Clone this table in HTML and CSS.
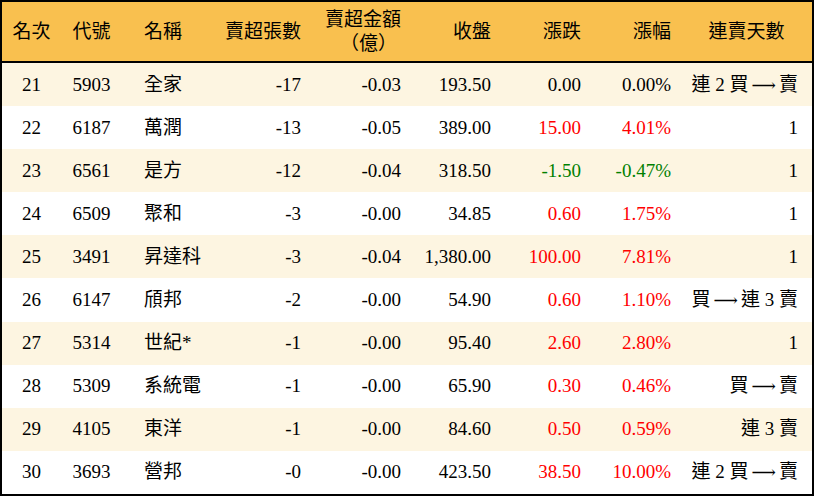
FILE: index.html
```html
<!DOCTYPE html>
<html lang="zh-Hant">
<head>
<meta charset="utf-8">
<title>賣超排行</title>
<link rel="stylesheet" href="styles.css">
</head>
<body>
<div class="board">
  <div class="row head">
    <div class="c1">名次</div>
    <div class="c2">代號</div>
    <div class="c3">名稱</div>
    <div class="num">賣超張數</div>
    <div class="num two">賣超金額<br><span class="unit">（億）</span></div>
    <div class="num">收盤</div>
    <div class="num">漲跌</div>
    <div class="num">漲幅</div>
    <div class="c9">連賣天數</div>
  </div>
  <div class="row odd">
    <div class="c1">21</div><div class="c2">5903</div><div class="c3">全家</div>
    <div class="num">-17</div><div class="num">-0.03</div><div class="num">193.50</div>
    <div class="num">0.00</div><div class="num">0.00%</div><div class="c9">連 2 買<span class="arrow">⟶</span>賣</div>
  </div>
  <div class="row">
    <div class="c1">22</div><div class="c2">6187</div><div class="c3">萬潤</div>
    <div class="num">-13</div><div class="num">-0.05</div><div class="num">389.00</div>
    <div class="num up">15.00</div><div class="num up">4.01%</div><div class="c9">1</div>
  </div>
  <div class="row odd">
    <div class="c1">23</div><div class="c2">6561</div><div class="c3">是方</div>
    <div class="num">-12</div><div class="num">-0.04</div><div class="num">318.50</div>
    <div class="num down">-1.50</div><div class="num down">-0.47%</div><div class="c9">1</div>
  </div>
  <div class="row">
    <div class="c1">24</div><div class="c2">6509</div><div class="c3">聚和</div>
    <div class="num">-3</div><div class="num">-0.00</div><div class="num">34.85</div>
    <div class="num up">0.60</div><div class="num up">1.75%</div><div class="c9">1</div>
  </div>
  <div class="row odd">
    <div class="c1">25</div><div class="c2">3491</div><div class="c3">昇達科</div>
    <div class="num">-3</div><div class="num">-0.04</div><div class="num">1,380.00</div>
    <div class="num up">100.00</div><div class="num up">7.81%</div><div class="c9">1</div>
  </div>
  <div class="row">
    <div class="c1">26</div><div class="c2">6147</div><div class="c3">頎邦</div>
    <div class="num">-2</div><div class="num">-0.00</div><div class="num">54.90</div>
    <div class="num up">0.60</div><div class="num up">1.10%</div><div class="c9">買<span class="arrow">⟶</span>連 3 賣</div>
  </div>
  <div class="row odd">
    <div class="c1">27</div><div class="c2">5314</div><div class="c3">世紀*</div>
    <div class="num">-1</div><div class="num">-0.00</div><div class="num">95.40</div>
    <div class="num up">2.60</div><div class="num up">2.80%</div><div class="c9">1</div>
  </div>
  <div class="row">
    <div class="c1">28</div><div class="c2">5309</div><div class="c3">系統電</div>
    <div class="num">-1</div><div class="num">-0.00</div><div class="num">65.90</div>
    <div class="num up">0.30</div><div class="num up">0.46%</div><div class="c9">買<span class="arrow">⟶</span>賣</div>
  </div>
  <div class="row odd">
    <div class="c1">29</div><div class="c2">4105</div><div class="c3">東洋</div>
    <div class="num">-1</div><div class="num">-0.00</div><div class="num">84.60</div>
    <div class="num up">0.50</div><div class="num up">0.59%</div><div class="c9">連 3 賣</div>
  </div>
  <div class="row">
    <div class="c1">30</div><div class="c2">3693</div><div class="c3">營邦</div>
    <div class="num">-0</div><div class="num">-0.00</div><div class="num">423.50</div>
    <div class="num up">38.50</div><div class="num up">10.00%</div><div class="c9">連 2 買<span class="arrow">⟶</span>賣</div>
  </div>
</div>
</body>
</html>
```

FILE: styles.css
```css
html, body {
  margin: 0;
  padding: 0;
  background: #ffffff;
}

.board {
  box-sizing: border-box;
  width: 814px;
  height: 496px;
  border: 2px solid #000000;
  display: flex;
  flex-direction: column;
  font-family: "Liberation Serif", "Noto Sans CJK TC", serif;
  font-size: 19px;
  color: #000000;
}

.row {
  display: grid;
  grid-template-columns: 59px 61px 83px 106px 100px 90px 90px 90px 131px;
  align-items: center;
  height: 43.1px;
  line-height: 22px;
  background: #ffffff;
}

.row.odd {
  background: #fdf5e1;
}

.row.head {
  height: 59px;
  background: #f9c04f;
  border-bottom: 2px solid #000000;
  line-height: 24px;
}

.c1, .c2 {
  text-align: center;
}

.c3 {
  text-align: left;
  padding-left: 22px;
}

.num {
  text-align: right;
  padding-right: 10px;
  white-space: nowrap;
}

.num.two {
  line-height: 24px;
}

.unit {
  display: inline-block;
  padding-right: 4px;
}

.c9 {
  text-align: right;
  padding-right: 14px;
  white-space: nowrap;
}

.head .c9 {
  text-align: center;
  padding-right: 0;
}

.arrow {
  font-family: "DejaVu Serif", serif;
  font-size: 17px;
  margin: 0 3px;
}

.up {
  color: #ff0000;
}

.down {
  color: #008000;
}
```
